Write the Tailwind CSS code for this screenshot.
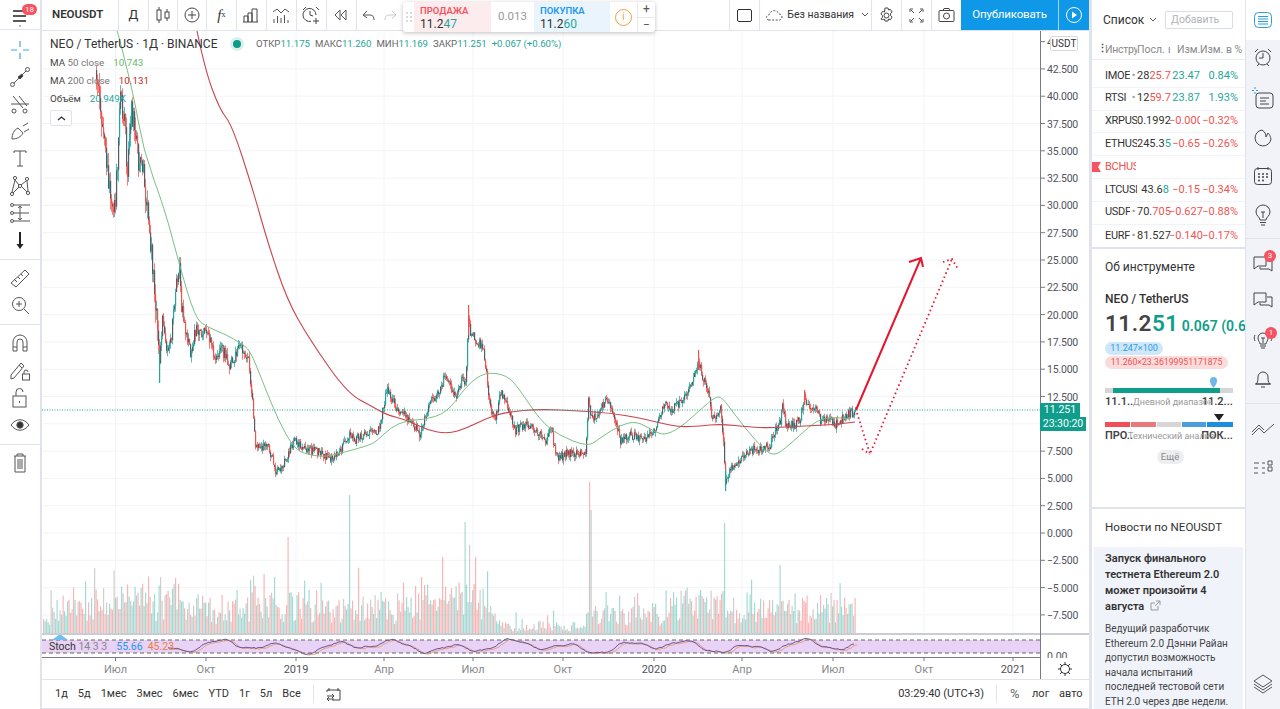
<!DOCTYPE html>
<html lang="ru">
<head>
  <meta charset="UTF-8" />
  <title>NEOUSDT</title>
  <script src="https://cdn.jsdelivr.net/npm/@tailwindcss/browser@4"></script>
</head>
<body class="w-[1280px] h-[709px] overflow-hidden flex bg-[#e0e3eb] text-[#333] font-['Roboto',sans-serif]">

  <!-- left tools -->
  <div class="w-[40px] h-full flex flex-col bg-white mr-[2px] shrink-0">
    <div class="relative h-[30px] border-b border-[#e0e3eb] shrink-0">
      <svg class="absolute left-[13px] top-[10px]" width="14" height="12" stroke="#222" stroke-width="1.4"><path d="M0 1h13M0 6h13M0 11h13"/></svg>
      <span class="absolute left-[22px] top-[4px] w-[15px] h-[11px] rounded-full bg-[#f7525f] text-white text-[8px] leading-[11px] text-center">18</span>
      <span class="absolute left-[19px] top-[25px] w-[2px] h-[2px] rounded-full bg-[#aaa]"></span>
    </div>
    <div class="flex flex-col items-center pt-[6px]">
      <div class="h-[27.2px] flex items-center"><svg width="22" height="22" stroke="#45a5e0" stroke-width="1.2"><path d="M11 2v6M11 14v6M2 11h6M14 11h6"/></svg></div>
      <div class="h-[27.2px] flex items-center"><svg width="22" height="22" fill="none" stroke="#555"><circle cx="3.5" cy="18.5" r="2"/><path d="M5 17L17 5"/><circle cx="18.5" cy="3.5" r="2"/><path fill="#333" d="M9 11l4-3 1 2-3 3z"/></svg></div>
      <div class="h-[27.2px] flex items-center"><svg width="22" height="22" fill="none" stroke="#555"><path d="M4 3l10 12M10 3l8 10M2 11h18"/><circle cx="5" cy="18" r="2"/><circle cx="16" cy="18" r="2"/></svg></div>
      <div class="h-[27.2px] flex items-center"><svg width="22" height="22" fill="none" stroke="#555"><path d="M3 19c0-5 2-9 6-11l5 5c-2 4-6 6-11 6zM14 6l5-3M15 12l5-3"/></svg></div>
      <div class="h-[27.2px] flex items-center"><svg width="22" height="22" fill="none" stroke="#555"><path d="M5 6V4h12v2M11 4v15M8 19h6"/></svg></div>
      <div class="h-[27.2px] flex items-center"><svg width="22" height="22" fill="none" stroke="#555"><circle cx="6" cy="3" r="1.6"/><circle cx="18" cy="4" r="1.6"/><circle cx="11" cy="11" r="1.6"/><circle cx="3" cy="19" r="1.6"/><circle cx="19" cy="18" r="1.6"/><path d="M6 5l-3 12M6 5l4 5M17 6l-5 4M18 6l1 10M4 18l6-6M13 12l5 5"/></svg></div>
      <div class="h-[27.2px] flex items-center"><svg width="22" height="22" fill="none" stroke="#555"><path d="M4 3h17M4 11h16M4 19h17M11 4v14M9 6l2-2 2 2M9 16l2 2 2-2"/><circle cx="3" cy="3" r="1.5"/><circle cx="3" cy="11" r="1.5"/><circle cx="3" cy="19" r="1.5"/></svg></div>
      <div class="h-[27.2px] flex items-center"><svg width="22" height="22" fill="#222"><path d="M10 3h2v12h2.5L11 20l-3.5-5H10z"/></svg></div>
      <div class="w-full border-b border-[#e0e3eb] my-[5px]"></div>
      <div class="h-[27.2px] flex items-center"><svg width="22" height="22" fill="none" stroke="#555"><path d="M2 16L16 3l4 4L7 20zM6 13l2 2M9 10l2 2M12 7l2 2"/></svg></div>
      <div class="h-[27.2px] flex items-center"><svg width="22" height="22" fill="none" stroke="#555"><circle cx="10" cy="10" r="6.5"/><path d="M15 15l5 5M7 10h6M10 7v6"/></svg></div>
      <div class="w-full border-b border-[#e0e3eb] mt-[5px] mb-[5px]"></div>
      <div class="h-[27.2px] flex items-center"><svg width="22" height="22" fill="none" stroke="#555"><path d="M4 19V10a7 7 0 0 1 14 0v9h-4v-9a3 3 0 0 0-6 0v9zM4 15h4M14 15h4"/></svg></div>
      <div class="h-[27.2px] flex items-center"><svg width="22" height="22" fill="none" stroke="#555"><path d="M2 15L12 3l3 3L5 18l-3 1zM10 5l3 3"/><rect x="13.5" y="14" width="7" height="6"/><path d="M15 14v-2a2 2 0 0 1 4 0"/></svg></div>
      <div class="h-[27.2px] flex items-center"><svg width="22" height="22" fill="none" stroke="#555"><rect x="4" y="9" width="13" height="11"/><path d="M7 9V5a3.500 3.500 0 0 1 7 0M10.500 14v2"/></svg></div>
      <div class="h-[27.2px] flex items-center"><svg width="22" height="22" fill="none" stroke="#555"><path d="M2 11c5-7 13-7 18 0-5 7-13 7-18 0z"/><circle cx="11" cy="11" r="3.200" fill="#333"/></svg></div>
      <div class="w-full border-b border-[#e0e3eb] mt-[5px] mb-[5px]"></div>
      <div class="h-[27.2px] flex items-center"><svg width="22" height="22" fill="none" stroke="#555"><path d="M5 4h12M8 4V2h6v2M6 4v16h10V4M9 7v10M11 7v10M13 7v10"/></svg></div>
    </div>
  </div>

  <!-- chart column -->
  <div class="w-[1047px] h-[709px] flex flex-col shrink-0 bg-white relative">
    <!-- top toolbar -->
    <div class="h-[31px] flex items-stretch border-b border-[#e0e3eb] shrink-0">
      <div class="w-[77px] border-r border-[#e0e3eb] flex items-center pl-[10px] text-[11.500px] font-semibold">NEOUSDT</div>
      <div class="w-[30px] border-r border-[#e0e3eb] flex items-center justify-center text-[13px]">Д</div>
      <div class="w-[29px] border-r border-[#e0e3eb] flex items-center justify-center"><svg width="18" height="18" fill="none" stroke="#444"><path d="M5 1v16M13 3v12"/><rect x="3" y="4" width="4" height="10" fill="#fff"/><rect x="11" y="6" width="4" height="6" fill="#fff"/></svg></div>
      <div class="w-[29px] border-r border-[#e0e3eb] flex items-center justify-center"><svg width="18" height="18" fill="none" stroke="#444"><circle cx="9" cy="9" r="7"/><path d="M5 9h8M9 5v8"/></svg></div>
      <div class="w-[30px] border-r border-[#e0e3eb] flex items-center justify-center text-[15px] font-['Liberation_Serif',serif] italic">f<span class="text-[8px] not-italic">x</span></div>
      <div class="w-[30px] border-r border-[#e0e3eb] flex items-center justify-center"><svg width="18" height="18" fill="none" stroke="#444"><path d="M2 16V10h4v6M6 16V7h4v9M10 16V3h5v13M1 16h15"/></svg></div>
      <div class="w-[30px] border-r border-[#e0e3eb] flex items-center justify-center"><svg width="18" height="18" fill="none" stroke="#555"><path d="M1 6l4-3 4 4 4-4 4 3M2 17v-4M5.500 17v-7M9 17v-5M12.500 17v-8M16 17v-3"/></svg></div>
      <div class="w-[30px] border-r border-[#e0e3eb] flex items-center justify-center"><svg width="20" height="20" fill="none" stroke="#444"><path d="M15 10a6.500 6.500 0 1 0-5 6.300M9 6v4l3 1M2 5l3-3M15 2l3 3M15 13v6M12 16h6"/></svg></div>
      <div class="w-[30px] border-r border-[#e0e3eb] flex items-center justify-center"><svg width="14" height="12" fill="none" stroke="#555"><path d="M6 1L1 6l5 5zM12 1L7 6l5 5z"/></svg></div>
      <div class="w-[46px] flex items-center gap-[9px] pl-[5px]">
        <svg width="13" height="11" fill="none" stroke="#555"><path d="M5 1L1 5l4 3M1 5h7c3 0 4 2 4 5"/></svg>
        <svg width="13" height="11" fill="none" stroke="#ccc"><path d="M8 1l4 4-4 3M12 5H5c-3 0-4 2-4 5"/></svg>
      </div>
      <div class="w-[328px] border-r border-[#e0e3eb]"></div>
      <div class="w-[30px] border-r border-[#e0e3eb] flex items-center justify-center"><span class="w-[15px] h-[13px] border border-[#333] rounded-[2px]"></span></div>
      <div class="w-[112px] border-r border-[#e0e3eb] flex items-center gap-[4px] pl-[6px] text-[10.500px] whitespace-nowrap"><svg width="17" height="12" fill="none" stroke="#555" stroke-dasharray="2 1.500"><path d="M3 11a2.500 2.500 0 0 1 0-5c1-5 8-6 10-1 4 0 4 6 0 6z"/></svg>Без названия<svg class="ml-[3px]" width="8" height="6" fill="none" stroke="#555"><path d="M1 1l3 3 3-3"/></svg></div>
      <div class="w-[30px] border-r border-[#e0e3eb] flex items-center justify-center"><svg width="17" height="17" fill="none" stroke="#444"><path d="M7 1h3l.5 2 2-.6 1.600 2.600-1.500 1.500v2l1.500 1.500-1.600 2.600-2-.6-.5 2H7l-.5-2-2 .6L2.900 12l1.500-1.500v-2L2.900 7l1.600-2.600 2 .6z"/><circle cx="8.500" cy="8.500" r="2.500"/></svg></div>
      <div class="w-[30px] border-r border-[#e0e3eb] flex items-center justify-center"><svg width="15" height="15" fill="none" stroke="#555"><path d="M1 4V1h3M14 4V1h-3M1 11v3h3M14 11v3h-3M2 2l3 3M13 2l-3 3M2 13l3-3M13 13l-3-3"/></svg></div>
      <div class="w-[29px] flex items-center justify-center"><svg width="17" height="14" fill="none" stroke="#444"><rect x="1" y="2.500" width="15" height="11" rx="1"/><circle cx="8.500" cy="8" r="3"/><path d="M5 2.500l1-2h5l1 2"/></svg></div>
      <div class="w-[98px] bg-[#0f98e8] text-white flex items-center justify-center text-[11.500px] tracking-[-0.2px] border-r border-white/60">Опубликовать</div>
      <div class="w-[30px] bg-[#0f98e8] flex items-center justify-center"><svg width="18" height="18" fill="none" stroke="#fff"><circle cx="9" cy="9" r="7.500"/><path fill="#fff" stroke="none" d="M7 5.500l5 3.500-5 3.500z"/></svg></div>
    </div>

    <!-- floating trade panel -->
    <div class="absolute left-[361px] top-[2px] w-[252px] h-[30px] bg-white rounded-[3px] shadow-[0_1px_4px_rgba(0,0,0,0.25)] flex z-10 overflow-hidden">
      <div class="w-[11px] flex items-center justify-center"><svg width="6" height="12" fill="#ccc"><circle cx="1" cy="2" r="1"/><circle cx="5" cy="2" r="1"/><circle cx="1" cy="6" r="1"/><circle cx="5" cy="6" r="1"/><circle cx="1" cy="10" r="1"/><circle cx="5" cy="10" r="1"/></svg></div>
      <div class="w-[77px] bg-[#fdecee] pl-[6px] pt-[2px]">
        <div class="text-[9.500px] leading-[13px] font-semibold text-[#f7525f]">ПРОДАЖА</div>
        <div class="text-[12px] leading-[14px]">11.2<span class="text-[#26a69a]">47</span></div>
      </div>
      <div class="w-[43px] flex items-center justify-center text-[11.500px] text-[#999]">0.013</div>
      <div class="w-[76px] bg-[#e9f4fd] pl-[6px] pt-[2px]">
        <div class="text-[9.500px] leading-[13px] font-semibold text-[#2196f3]">ПОКУПКА</div>
        <div class="text-[12px] leading-[14px]">11.2<span class="text-[#26a69a]">60</span></div>
      </div>
      <div class="w-[28px] flex items-center justify-center border-r border-[#e8e8e8]"><span class="w-[17px] h-[17px] rounded-full border-[1.500px] border-[#f0a040] text-[#f0a040] text-[10px] leading-[14px] text-center">i</span></div>
      <div class="flex-1 flex flex-col text-[#555] text-[12px] leading-[15px] text-center"><span class="border-b border-[#e8e8e8]">+</span><span>−</span></div>
    </div>

    <!-- chart -->
    <div class="relative flex-1 overflow-hidden">
      <svg id="chart" width="1047" height="648" viewBox="42 31 1047 648" class="block"></svg>
      <div class="absolute left-[8px] top-[5px] flex items-center text-[12px] leading-[16px] whitespace-nowrap">
        <span class="w-[168px]">NEO / TetherUS · 1Д · BINANCE</span>
        <span class="ml-[15px] w-[8px] h-[8px] rounded-full bg-[#0c9b87] ring-[3px] ring-[#0c9b87]/15"></span>
        <span class="ml-[15px] text-[9.600px] text-[#666] flex gap-[5px]">
          <span>ОТКР<span class="text-[#26a69a]">11.175</span></span>
          <span>МАКС<span class="text-[#26a69a]">11.260</span></span>
          <span>МИН<span class="text-[#26a69a]">11.169</span></span>
          <span>ЗАКР<span class="text-[#26a69a]">11.251</span></span>
          <span class="text-[#26a69a]">+0.067 (+0.60%)</span>
        </span>
      </div>
      <div class="absolute left-[8px] top-[23px] flex flex-col items-start text-[9.800px] leading-[18px] whitespace-nowrap">
        <div><span class="text-[#444]">MA</span> <span class="text-[#777]">50 close</span><span class="ml-[9px] text-[#66bb6a]">10.743</span></div>
        <div><span class="text-[#444]">MA</span> <span class="text-[#777]">200 close</span><span class="ml-[9px] text-[#c62828]">10.131</span></div>
        <div><span class="text-[#444]">Объём</span><span class="ml-[9px] text-[#26a69a]">20.949K</span></div>
        <div class="mt-[2px] w-[22px] h-[16px] border border-[#e0e3eb] rounded-[2px] bg-white flex items-center justify-center"><svg width="9" height="5" fill="none" stroke="#333" stroke-width="1.300"><path d="M1 4l3.500-3L8 4"/></svg></div>
      </div>
      <div class="absolute left-[1008px] top-[5px] w-[28px] h-[15px] border border-[#d6d8de] rounded-[2px] bg-white text-[10px] leading-[13px] text-center">USDT</div>
      <div class="absolute left-[998px] top-[372px] w-[40px] h-[14px] bg-[#0f9d8c] text-white text-[10.500px] leading-[14px] text-center">11.251</div>
      <div class="absolute left-[998px] top-[386px] w-[46px] h-[14px] bg-[#0f9d8c] text-white text-[10.500px] leading-[14px] text-center">23:30:20</div>
      <div class="absolute left-[7px] top-[608px] text-[10.500px] leading-[16px] whitespace-nowrap"><span class="text-[#333]">Stoch</span> <span class="text-[#888]">14 3 3</span><span class="ml-[9px] text-[#2196f3]">55.66</span><span class="ml-[5px] text-[#f08040]">45.23</span></div>
      <svg class="absolute left-[1015px] top-[630px]" width="16" height="16" fill="none" stroke="#333"><circle cx="8" cy="8" r="4.500"/><path d="M8 1v2.500M8 12.500V15M1 8h2.500M12.500 8H15M3 3l2 2M11 11l2 2M13 3l-2 2M5 11l-2 2"/></svg>
    </div>

    <!-- bottom range bar -->
    <div class="h-[30px] shrink-0 border-t border-b border-[#e0e3eb] bg-white flex items-center text-[11px] pl-[13px] whitespace-nowrap">
      <div class="flex gap-[10px]">
        <span>1д</span><span>5д</span><span>1мес</span><span>3мес</span><span>6мес</span><span>YTD</span><span>1г</span><span>5л</span><span>Все</span>
      </div>
      <div class="h-[18px] ml-[12px] mr-[12px] border-l border-[#e0e3eb]"></div>
      <svg width="15" height="15" fill="none" stroke="#444"><path d="M3 1v3M12 1v3M1 5V3h13v10H6M1 9h7M6 7l2 2-2 2M8 12H1M3 10l-2 2 2 2"/></svg>
      <div class="ml-auto flex items-center">
        <span>03:29:40 (UTC+3)</span>
        <div class="h-[18px] ml-[12px] mr-[13px] border-l border-[#e0e3eb]"></div>
        <span class="w-[22px] text-[#666] text-[13px]">%</span>
        <span class="w-[27px]">лог</span>
        <span class="w-[30px]">авто</span>
      </div>
    </div>
  </div>

  <!-- right widgets -->
  <div class="w-[153px] h-full ml-[3px] flex flex-col gap-[2px] shrink-0">
    <div class="h-[247px] bg-white flex flex-col overflow-hidden">
      <div class="h-[40px] flex items-center pl-[11px] shrink-0">
        <span class="text-[12px] w-[40px]">Список</span>
        <svg class="ml-[6px]" width="8" height="6" fill="none" stroke="#555"><path d="M1 1l3 3 3-3"/></svg>
        <span class="ml-[8px] w-[68px] h-[18px] border border-[#d9dce3] rounded-[2px] text-[#b0b3bb] text-[10.500px] leading-[16px] pl-[5px]">Добавить</span>
      </div>
      <div class="h-[20px] border-b border-[#e8eaf0] flex items-center text-[10.500px] text-[#888] whitespace-nowrap shrink-0">
        <span class="w-[13px] pl-[5px] text-[#555] font-bold leading-none">⋮</span>
        <span class="w-[32px] overflow-hidden tracking-[-0.3px]">Инструмент</span>
        <span class="w-[31px] overflow-hidden">Посл.</span>
        <span class="w-[9px]">ı</span>
        <span class="w-[23px]">Изм.</span>
        <span>Изм. в %</span>
      </div>
      <div class="pt-[5px] flex flex-col text-[11px] whitespace-nowrap">
        <div class="h-[22.800px] border-b border-[#f0f3fa] flex items-center pl-[13px]"><span class="w-[25px] overflow-hidden tracking-[-0.3px]">IMOE</span><span class="w-[7px] text-[#999] text-center">•</span><span class="w-[32px]">28<span class="text-[#ef5350]">25.7</span></span><span class="w-[31px] text-right text-[#26a69a]">23.47</span><span class="w-[38px] text-right text-[#26a69a]">0.84%</span></div>
        <div class="h-[22.800px] border-b border-[#f0f3fa] flex items-center pl-[13px]"><span class="w-[25px] overflow-hidden tracking-[-0.3px]">RTSI</span><span class="w-[7px] text-[#999] text-center">•</span><span class="w-[32px]">12<span class="text-[#ef5350]">59.7</span></span><span class="w-[31px] text-right text-[#26a69a]">23.87</span><span class="w-[38px] text-right text-[#26a69a]">1.93%</span></div>
        <div class="h-[22.800px] border-b border-[#f0f3fa] flex items-center pl-[13px]"><span class="w-[32px] overflow-hidden tracking-[-0.3px]">XRPUSD</span><span class="w-[32px]">0.1992</span><span class="w-[31px] text-right text-[#ef5350] overflow-hidden">−0.000</span><span class="w-[38px] text-right text-[#ef5350]">−0.32%</span></div>
        <div class="h-[22.800px] border-b border-[#f0f3fa] flex items-center pl-[13px]"><span class="w-[32px] overflow-hidden tracking-[-0.3px]">ETHUSD</span><span class="w-[32px]">245.3<span class="text-[#26a69a]">5</span></span><span class="w-[31px] text-right text-[#ef5350]">−0.65</span><span class="w-[38px] text-right text-[#ef5350]">−0.26%</span></div>
        <div class="h-[22.800px] border-b border-[#f0f3fa] flex items-center text-[#ef5350]"><span class="w-[13px]"><svg width="9" height="10" fill="#f7525f"><path d="M0 0h9L6 5l3 5H0z"/></svg></span><span class="w-[31px] overflow-hidden tracking-[-0.3px]">BCHUSD</span></div>
        <div class="h-[22.800px] border-b border-[#f0f3fa] flex items-center pl-[13px]"><span class="w-[32px] overflow-hidden tracking-[-0.3px]">LTCUSD</span><span class="w-[32px] text-right">43.6<span class="text-[#26a69a]">8</span></span><span class="w-[31px] text-right text-[#ef5350]">−0.15</span><span class="w-[38px] text-right text-[#ef5350]">−0.34%</span></div>
        <div class="h-[22.800px] border-b border-[#f0f3fa] flex items-center pl-[13px]"><span class="w-[25px] overflow-hidden tracking-[-0.3px]">USDF</span><span class="w-[7px] text-[#999] text-center">•</span><span class="w-[32px]">70.<span class="text-[#ef5350]">705</span></span><span class="w-[31px] text-right text-[#ef5350]">−0.627</span><span class="w-[38px] text-right text-[#ef5350]">−0.88%</span></div>
        <div class="h-[22.800px] flex items-center pl-[13px]"><span class="w-[25px] overflow-hidden tracking-[-0.3px]">EURF</span><span class="w-[7px] text-[#999] text-center">•</span><span class="w-[32px]">81.527</span><span class="w-[31px] text-right text-[#ef5350]">−0.140</span><span class="w-[38px] text-right text-[#ef5350]">−0.17%</span></div>
      </div>
    </div>

    <div class="h-[258px] bg-white pl-[13px] pr-[12px] overflow-hidden whitespace-nowrap">
      <div class="pt-[9px] text-[12px] leading-[18px]">Об инструменте</div>
      <div class="mt-[15px] text-[12px] leading-[16px] font-medium">NEO / TetherUS</div>
      <div class="mt-[1px] flex items-baseline w-[140px] overflow-hidden">
        <span class="text-[22.500px] leading-[30px] font-semibold tracking-[0.5px] text-[#444]">11.2<span class="text-[#0f9d8c]">51</span></span>
        <span class="ml-[3px] text-[14px] font-semibold text-[#0f9d8c]">0.067 (0.60%)</span>
      </div>
      <div class="mt-[4px] w-[58px] h-[13px] rounded-full bg-[#cfe7f8] text-[#2b9de8] text-[9px] leading-[13px] text-center">11.247×100</div>
      <div class="mt-[1px] w-[123px] h-[13px] rounded-full bg-[#fbdcdd] text-[#ef5350] text-[8.700px] leading-[13px] text-center">11.260×23.36199951171875</div>
      <div class="relative mt-[19px] h-[5px] flex w-[128px]">
        <span class="w-[8px] bg-[#d6d6d6]"></span><span class="w-[107px] bg-[#0f9d8c]"></span><span class="w-[13px] bg-[#d6d6d6]"></span>
        <svg class="absolute left-[104px] top-[-12px]" width="9" height="12" fill="#6fb7ea"><path d="M4.500 12C2 8.500 1 7 1 4.500a3.500 3.500 0 0 1 7 0C8 7 7 8.500 4.500 12z"/></svg>
      </div>
      <div class="relative flex justify-between w-[128px] h-[16px] text-[11px] leading-[16px] font-semibold text-[#444] mt-[1px]">
        <span>11.1..</span><span>11.2...</span>
        <span class="absolute left-[28px] top-0 text-[9px] font-normal text-[#999]">Дневной диапазон</span>
      </div>
      <div class="relative mt-[12px] h-[5px] flex gap-[1px] w-[128px]">
        <span class="w-[25px] bg-[#f14e55]"></span><span class="w-[25px] bg-[#e77b7b]"></span><span class="w-[24px] bg-[#d6d6d6]"></span><span class="w-[24px] bg-[#4a9fdb]"></span><span class="w-[26px] bg-[#1a8fe0]"></span>
        <svg class="absolute left-[109px] top-[-8px]" width="10" height="7" fill="#222"><path d="M0 0h10L5 7z"/></svg>
      </div>
      <div class="relative flex justify-between w-[128px] h-[16px] text-[11px] leading-[16px] font-semibold text-[#444] mt-[1px]">
        <span>ПРО..</span><span>ПОК...</span>
        <span class="absolute left-[23px] top-0 text-[9px] font-normal text-[#999]">Технический анализ</span>
      </div>
      <div class="mt-[6px] mx-auto w-[27px] h-[14px] rounded-full bg-[#eceef2] text-[9.500px] leading-[14px] text-center text-[#888] relative left-[1px]">Ещё</div>
    </div>

    <div class="flex-1 bg-white overflow-hidden whitespace-nowrap">
      <div class="h-[38px] pl-[13px] flex items-center text-[11.600px]">Новости по NEOUSDT</div>
      <div class="mx-[2px] bg-[#f0f3fa] pl-[11px] pt-[4px]">
        <div class="text-[11px] leading-[16px] font-semibold">Запуск финального<br>тестнета Ethereum 2.0<br>может произойти 4<br>августа
          <svg class="inline ml-[3px] align-[-1px]" width="11" height="11" fill="none" stroke="#999"><path d="M8 6v4H1V3h4M6 1h4v4M10 1L5 6"/></svg>
        </div>
        <div class="mt-[7px] text-[10px] leading-[14.500px] text-[#444]">Ведущий разработчик<br>Ethereum 2.0 Дэнни Райан<br>допустил возможность<br>начала испытаний<br>последней тестовой сети<br>ETH 2.0 через две недели.</div>
      </div>
    </div>
  </div>

  <!-- icon rail -->
  <div class="w-[34px] h-full ml-[1px] bg-[#f1f3f9] flex flex-col items-center shrink-0">
    <div class="w-full h-[40px] bg-white flex items-center justify-center"><svg width="20" height="20" fill="none" stroke="#2a9de2"><rect x="1.500" y="2.500" width="17" height="15" rx="4"/><path d="M5 6.500h10M5 9h10M5 11.500h10M5 14h10"/></svg></div>
    <div class="h-[36px] flex items-center"><svg width="20" height="22" fill="none" stroke="#444"><circle cx="10" cy="11" r="7"/><path d="M10 6v5H6M2 5l3-3M18 5l-3-3M4 19l2-2M16 19l-2-2"/></svg></div>
    <div class="h-[44px] flex items-center"><svg width="22" height="22" fill="none" stroke="#444"><rect x="4" y="6" width="17" height="15" rx="3"/><path d="M8 11h9M8 14h6M8 17h9"/><path stroke="#2a9de2" d="M3 0v2M3 5v2M0 3.500h2M4 3.500h2"/></svg></div>
    <div class="h-[36px] flex items-center"><svg width="20" height="20" fill="none" stroke="#444"><path d="M9 2a8 8 0 1 0 9 9c-1-4-2-5-3-6l-2 4c0-3-1-5-4-7z"/></svg></div>
    <div class="h-[40px] flex items-center"><svg width="20" height="20" fill="none" stroke="#444"><rect x="1.500" y="2.500" width="17" height="16" rx="3"/><path d="M5 1v3M15 1v3"/><g fill="#444" stroke="none"><circle cx="6" cy="8" r="1"/><circle cx="10" cy="8" r="1"/><circle cx="14" cy="8" r="1"/><circle cx="6" cy="11" r="1"/><circle cx="10" cy="11" r="1"/><circle cx="14" cy="11" r="1"/><circle cx="6" cy="14.500" r="1"/><circle cx="10" cy="14.500" r="1"/></g></svg></div>
    <div class="h-[38px] flex items-center"><svg width="18" height="22" fill="none" stroke="#444"><path d="M6 16c0-3-4-4-4-8a7 7 0 0 1 14 0c0 4-4 5-4 8zM6 18.500h6M7 21h4M7 8h4M9 8v6"/></svg></div>
    <div class="w-full border-b border-[#e0e3eb] mt-[4px]"></div>
    <div class="relative h-[50px] flex items-center"><svg width="20" height="20" fill="none" stroke="#444"><path d="M1 3h12v9H5l-4 3zM14 7h5v10l-3-2H7v-2"/></svg><span class="absolute left-[11px] top-[11px] w-[12px] h-[12px] rounded-full bg-[#f7525f] text-white text-[8px] leading-[12px] text-center">3</span></div>
    <div class="h-[22px] flex items-center"><svg width="20" height="20" fill="none" stroke="#444"><path d="M1 3h12v9H5l-4 3zM14 7h5v10l-3-2H7v-2"/></svg></div>
    <div class="relative h-[58px] flex items-center"><svg width="22" height="20" fill="none" stroke="#444"><path d="M8 14c0-2-2-3-2-6a5 5 0 0 1 10 0c0 3-2 4-2 6zM8 16h6M9 18h4M9 8h4M11 8v5M3 5c-1 2-1 4 0 6M19 5c1 2 1 4 0 6"/></svg><span class="absolute left-[13px] top-[16px] w-[12px] h-[12px] rounded-full bg-[#f7525f] text-white text-[8px] leading-[12px] text-center">1</span></div>
    <div class="h-[20px] flex items-center"><svg width="20" height="20" fill="none" stroke="#444"><path d="M3 15c2-2 2-4 2-7a5 5 0 0 1 10 0c0 3 0 5 2 7zM2 15h16M8 18h4"/></svg></div>
    <div class="w-full border-b border-[#e0e3eb] mt-[14px]"></div>
    <div class="h-[52px] flex items-center"><svg width="24" height="18" fill="none" stroke="#555"><path d="M1 14l7-7 5 5 10-9"/><path d="M1 11l7-7 5 5"/></svg></div>
    <div class="h-[24px] flex items-center"><svg width="20" height="18" fill="none" stroke="#555"><path d="M1 4h5M1 9h4M1 14h4M9 4h3M9 9h3M9 14h3M15 2h4v4h-4zM15 8h4v4h-4z"/></svg></div>
    <div class="mt-auto h-[50px] flex items-center"><svg width="20" height="20" fill="none" stroke="#555"><path d="M10 1l9 6-9 6-9-6zM1 10l9 6 9-6M1 13l9 6 9-6"/></svg></div>
  </div>

  <script>
    const svg = document.getElementById("chart");
    let out = "";
    let seed = 7;
    function rnd() { seed = (seed * 16807) % 2147483647; return seed / 2147483647; }

    // closes traced off the reference, in page pixels
    const closes = [[96,70],[100,110],[104,130],[108,185],[113,225],[118,147],[120,90],[124,125],[127,170],[131,105],[135,140],[138,160],[142,165],[146,205],[150,245],[153,280],[157,325],[159,365],[162,320],[166,345],[170,345],[175,290],[179,265],[181,306],[185,330],[190,355],[196,325],[200,332],[208,335],[215,358],[222,350],[230,365],[237,348],[243,350],[248,363],[252,400],[255,443],[260,452],[265,440],[272,458],[275,470],[280,472],[285,460],[290,447],[295,440],[300,446],[310,450],[320,453],[328,458],[335,455],[345,443],[350,435],[355,440],[365,432],[375,435],[380,422],[386,390],[390,395],[395,408],[400,413],[410,420],[420,435],[425,416],[430,403],[440,388],[445,375],[455,397],[462,378],[465,385],[468,320],[470,333],[478,342],[483,348],[486,375],[490,410],[495,420],[500,392],[508,407],[515,430],[525,425],[535,430],[545,440],[550,427],[557,459],[570,452],[585,456],[588,400],[590,418],[600,412],[606,395],[615,420],[620,440],[630,436],[640,438],[650,436],[657,425],[665,402],[670,410],[680,402],[690,385],[698,360],[703,380],[708,392],[712,420],[720,408],[722,430],[724,462],[725,480],[730,470],[740,460],[750,450],[760,450],[770,445],[775,430],[780,420],[782,405],[785,425],[795,425],[800,418],[804,397],[808,405],[815,406],[820,420],[830,420],[835,425],[840,420],[845,416],[855,411]];
    const ma50 = [[117,30],[133,90],[143,150],[165,210],[178,260],[195,318],[207,327],[227,335],[240,343],[250,350],[262,380],[278,420],[295,450],[310,455],[325,457],[345,452],[370,445],[378,440],[390,428],[407,420],[423,420],[447,413],[467,385],[485,372],[507,375],[520,390],[540,420],[558,435],[588,447],[600,438],[620,425],[637,421],[655,432],[665,435],[680,428],[700,410],[715,397],[722,397],[735,415],[755,440],[770,455],[780,453],[800,435],[817,420],[833,417],[850,419]];
    const ma200 = [[197,31],[205,70],[220,110],[232,125],[253,190],[267,240],[287,300],[310,340],[347,393],[373,407],[387,415],[407,420],[427,430],[448,434],[467,428],[487,418],[507,412],[540,409],[580,411],[610,413],[640,418],[660,423],[680,427],[700,426],[720,424],[750,427],[770,428],[800,426],[830,425],[855,422]];
    const bigVol = {288:537,305:562,349:495,386:545,428:554,442:557,465:522,469:545,491:578,589:482,591:510,605:582,700:590,724:523,731:563,780:565,782:595,803:558,140:590,175:578,222:595,210:598,250:580,265:598,855:598};

    function at(list, x) {
      for (let i = 1; i < list.length; i++) {
        if (x <= list[i][0]) {
          const a = list[i-1], b = list[i];
          return a[1] + (b[1]-a[1]) * (x-a[0]) / (b[0]-a[0]);
        }
      }
      return list[list.length-1][1];
    }
    // smooth line through traced points
    function curve(list, color, w) {
      let d = `M${list[0][0]} ${list[0][1]}`;
      for (let i = 1; i < list.length - 1; i++) {
        const mx = (list[i][0]+list[i+1][0])/2, my = (list[i][1]+list[i+1][1])/2;
        d += `Q${list[i][0]} ${list[i][1]} ${mx} ${my}`;
      }
      const l = list[list.length-1];
      d += `L${l[0]} ${l[1]}`;
      return `<path d="${d}" fill="none" stroke="${color}" stroke-width="${w}"/>`;
    }

    // grid
    for (let p = -7.5; p <= 42.5; p += 2.5) {
      const y = 533 - p * 10.92;
      out += `<line x1="42" x2="1040" y1="${y}" y2="${y}" stroke="#f2f4f8"/>`;
    }
    const vx = [115.5,206,296,384,473,563,654,742,833,924,1013];
    const vl = ["Июл","Окт","2019","Апр","Июл","Окт","2020","Апр","Июл","Окт","2021"];
    vx.forEach(x => { out += `<line x1="${x}" x2="${x}" y1="31" y2="633" stroke="#f2f4f8"/>`; });

    // volume
    let vb = 14;
    for (let x = 43; x <= 855; x += 1.5) {
      vb += (rnd() - .5) * 8;
      vb = Math.min(30, Math.max(6, vb));
      let h = vb * (.4 + rnd() * 1.1) + (rnd() < .18 ? rnd() * 30 : 0);
      if ((x > 420 && x < 500) || (x > 720 && x < 790) || (x > 110 && x < 180)) h += rnd() * 16;
      if (x > 810) h *= .8;
      if (x > 495 && x < 585) h *= .7;
      let top = 633 - h;
      const big = bigVol[Math.round(x)];
      if (big) top = big;
      const r = rnd();
      const c = r < .42 ? "#ef5350" : r < .8 ? "#26a69a" : "#8a8a8a";
      out += `<rect x="${x}" y="${top.toFixed(1)}" width="1.2" height="${(633-top).toFixed(1)}" fill="${c}" opacity=".42"/>`;
    }

    // candles
    let prev = at(closes, 96);
    for (let x = 96; x <= 855; x += 1) {
      const amp = x < 160 ? 26 : x < 250 ? 13 : 9;
      const c = at(closes, x) + (rnd() - .5) * amp;
      const top = Math.min(prev, c), bot = Math.max(prev, c);
      const col = c < prev ? "#26a69a" : "#ef5350";
      const hi = top - rnd() * amp * .5, lo = bot + rnd() * amp * .5;
      out += `<rect x="${x}" y="${hi.toFixed(1)}" width="1" height="${(lo-hi).toFixed(1)}" fill="${col}" opacity=".75"/>`;
      out += `<rect x="${x}" y="${top.toFixed(1)}" width="1.2" height="${Math.max(bot-top,1).toFixed(1)}" fill="${x%2==0?"#555c66":col}"/>`;
      prev = c;
    }
    // sharp highs and lows that noise alone misses
    out += `<rect x="468" y="305" width="1.2" height="30" fill="#ef5350"/><rect x="725" y="470" width="1.2" height="21" fill="#26a69a"/><rect x="698" y="350" width="1.2" height="20" fill="#ef5350"/><rect x="804" y="390" width="1.2" height="15" fill="#ef5350"/><rect x="159" y="350" width="1.2" height="33" fill="#26a69a"/>`;

    // moving averages + last price line
    out += curve(ma50, "#7cbf85", 1);
    out += curve(ma200, "#c9444d", 1.1);
    out += `<line x1="42" x2="1040" y1="410" y2="410" stroke="#26a69a" stroke-dasharray="1 1.500"/>`;

    // drawn arrows
    out += `<path d="M856 410L921 258M909 262L921 258L923 267" fill="none" stroke="#e4172e" stroke-width="2"/>`;
    out += `<path d="M857 413L870 454L952 259M862 449L870 454M943 262L952 259L958 269" fill="none" stroke="#e4172e" stroke-width="1.800" stroke-dasharray="1.500 3"/>`;

    // stoch pane
    out += `<rect x="42" y="640" width="998" height="13" fill="#e8d2f5"/>`;
    out += `<path d="M42 640H1040M42 653H1040" stroke="#666" stroke-dasharray="4 3"/>`;
    let sK = "", sD = "";
    for (let x = 168; x <= 855; x += 2) {
      const y = 646.5 + Math.sin(x / 9.3) * 4 + Math.sin(x / 23 + 1) * 3 + Math.sin(x / 3.7) * 1 + (rnd() - .5) * 1.2;
      sK += `${x},${y.toFixed(1)} `;
      sD += `${x+3},${(y+.8).toFixed(1)} `;
    }
    out += `<polyline points="${sD}" fill="none" stroke="#e8894f" stroke-width="1" opacity=".7"/>`;
    out += `<polyline points="${sK}" fill="none" stroke="#6a5a96" stroke-width="1"/>`;
    out += `<path d="M52 640l8-6 8 6z" fill="#6fc0ee"/>`;

    // separators and axes
    out += `<rect x="42" y="633" width="1047" height="2" fill="#c9ccd3"/>`;
    out += `<line x1="42" x2="1040" y1="657.500" y2="657.500" stroke="#787b86"/>`;
    for (let p = -7.5; p <= 45; p += 2.5) {
      const y = 533 - p * 10.92;
      out += `<line x1="1041" x2="1045" y1="${y}" y2="${y}" stroke="#787b86"/>`;
      // 10.000 sits under the price labels
      if (p !== 10) out += `<text x="1047" y="${y+4}" font-size="10.500" letter-spacing="-.2" fill="#50535e">${(p<0?"−":"")+Math.abs(p).toFixed(3)}</text>`;
    }
    out += `<text x="1047" y="660" font-size="10.500" fill="#50535e">0.00</text>`;
    out += `<rect x="1041" y="658" width="48" height="21" fill="#fff"/>`;
    out += `<line x1="1040.500" x2="1040.500" y1="31" y2="679" stroke="#787b86"/>`;
    vx.forEach((x, i) => {
      out += `<line x1="${x}" x2="${x}" y1="657" y2="661" stroke="#787b86"/>`;
      out += `<text x="${x}" y="673" text-anchor="middle" font-size="11" fill="${vl[i][0]=="2"?"#50535e":"#888"}">${vl[i]}</text>`;
    });
    svg.innerHTML = out;
  </script>
</body>
</html>
